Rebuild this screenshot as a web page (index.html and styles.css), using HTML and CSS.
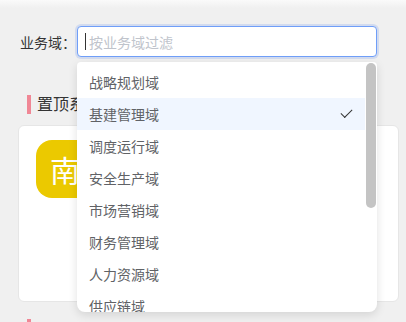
FILE: index.html
```html
<!DOCTYPE html>
<html lang="zh-CN">
<head>
    <meta charset="UTF-8">
    <meta name="viewport" content="width=device-width, initial-scale=1.0">
    <title>业务域过滤</title>
    <link rel="stylesheet" href="styles.css">
</head>
<body>
    <div class="page">
        <div class="filter">
            <span class="filter-label">业务域：</span>
            <div class="filter-input">
                <span class="caret"></span>
                <span class="placeholder">按业务域过滤</span>
            </div>
        </div>

        <div class="section-title">置顶系统</div>
        <div class="card">
            <div class="app-icon">南</div>
        </div>
        <div class="section-title next">常用系统</div>

        <!-- 下拉选项 -->
        <div class="dropdown">
            <ul class="options">
                <li>战略规划域</li>
                <li class="selected">基建管理域<span class="check"></span></li>
                <li>调度运行域</li>
                <li>安全生产域</li>
                <li>市场营销域</li>
                <li>财务管理域</li>
                <li>人力资源域</li>
                <li>供应链域</li>
            </ul>
            <div class="scroll-track">
                <div class="scroll-thumb"></div>
            </div>
        </div>
    </div>
</body>
</html>
```

FILE: styles.css
```css
* {
    margin: 0;
    padding: 0;
    box-sizing: border-box;
}

body {
    font-family: "Noto Sans CJK SC", "Noto Sans", sans-serif;
    background: linear-gradient(to bottom, #fafafa 0, #f0f0f0 8px, #f0f0f0 100%);
    color: #333;
    height: 322px;
    overflow: hidden;
}

.page {
    position: relative;
    padding: 26px 7px 0 18px;
}

.filter {
    display: flex;
    align-items: center;
    padding-left: 2px;
}

.filter-label {
    width: 57px;
    font-size: 14px;
    color: #333;
}

.filter-input {
    width: 300px;
    height: 31px;
    background: #fff;
    border: 1px solid #6f9ef8;
    border-radius: 4px;
    box-shadow: 0 0 0 2px rgba(80, 130, 240, 0.18);
    display: flex;
    align-items: center;
    padding-left: 7px;
}

.caret {
    width: 1px;
    height: 17px;
    background: #333;
    margin-right: 3px;
}

.placeholder {
    font-size: 14px;
    color: #c0c4cc;
}

.section-title {
    position: relative;
    margin: 36px 0 12px 9px;
    padding-left: 10px;
    font-size: 16px;
    line-height: 20px;
    color: #333;
}

.section-title::before {
    content: "";
    position: absolute;
    left: 0;
    top: 2px;
    width: 4px;
    height: 19px;
    background: #f08795;
}

.section-title.next {
    margin-top: 17px;
    line-height: 30px;
}

.section-title.next::before {
    top: 0;
}

.card {
    height: 177px;
    background: #fff;
    border: 1px solid #e6e6e6;
    border-radius: 6px;
    padding: 14px 17px;
}

.app-icon {
    width: 58px;
    height: 58px;
    border-radius: 16px;
    background: #ebc900;
    color: #fff;
    font-size: 30px;
    display: flex;
    align-items: center;
    justify-content: center;
}

.dropdown {
    position: absolute;
    left: 77px;
    top: 62px;
    width: 300px;
    height: 250px;
    background: #fff;
    border-radius: 4px 4px 8px 8px;
    box-shadow: 0 3px 10px rgba(0, 0, 0, 0.12);
    display: flex;
    overflow: hidden;
}

.options {
    list-style: none;
    flex: 1;
    padding-top: 4px;
}

.options li {
    height: 32px;
    line-height: 32px;
    padding: 0 13px 0 12px;
    font-size: 14px;
    color: #606266;
    display: flex;
    justify-content: space-between;
    align-items: center;
}

.options li.selected {
    background: #f0f6ff;
}

.check {
    width: 11px;
    height: 6px;
    border-left: 1.5px solid #333;
    border-bottom: 1.5px solid #333;
    transform: rotate(-45deg);
    margin-top: -4px;
}

.scroll-track {
    width: 12px;
    padding: 1px 1px 0 1px;
}

.scroll-thumb {
    width: 10px;
    height: 145px;
    border-radius: 5px;
    background: #c4c4c4;
}
```
